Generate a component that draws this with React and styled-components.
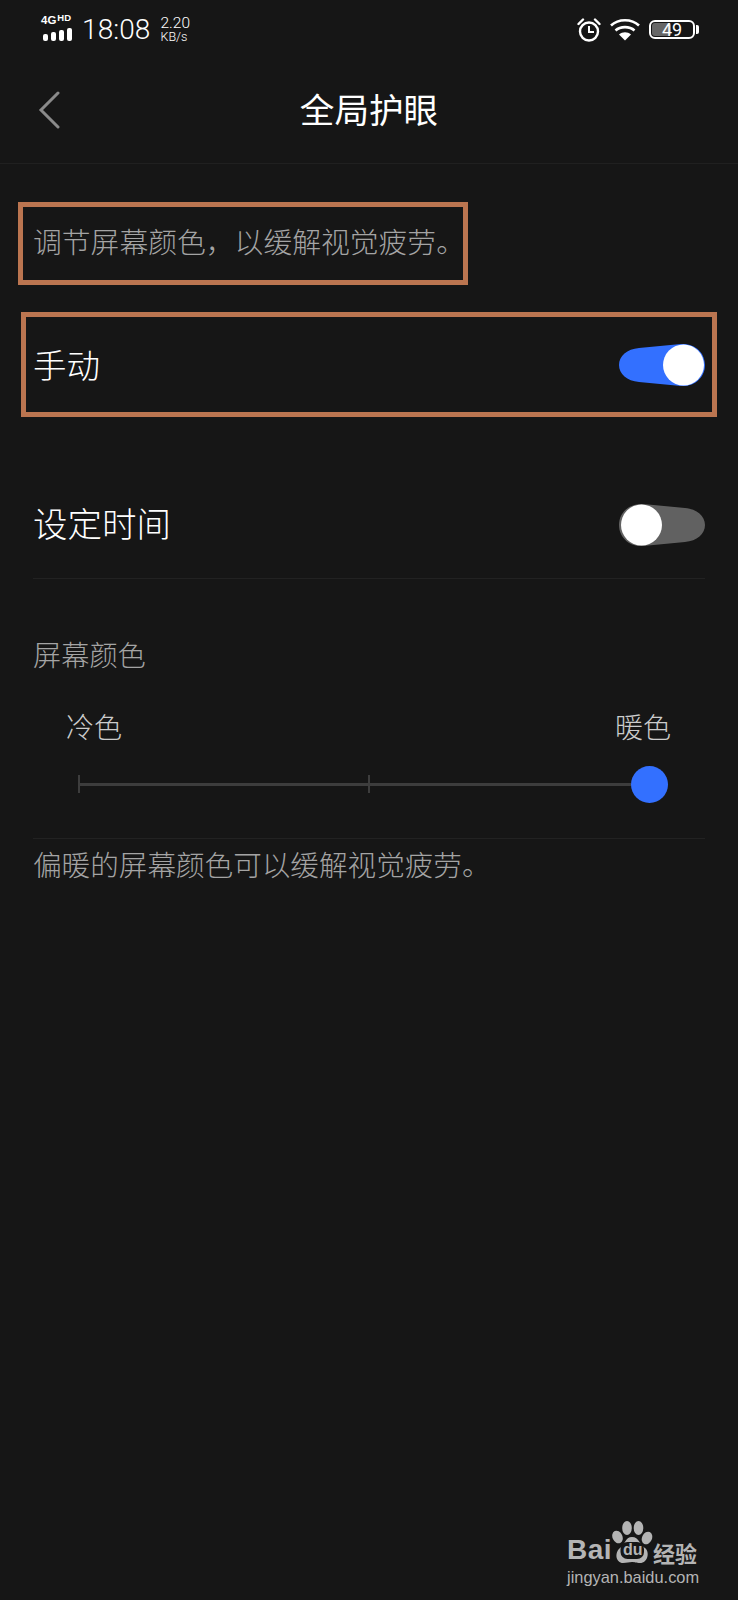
import React from "react";
import styled, { createGlobalStyle } from "styled-components";

const Global = createGlobalStyle`
  html, body {
    margin: 0;
    padding: 0;
    background: #161616;
  }
  * {
    box-sizing: border-box;
  }
`;

const cjk = `"Noto Sans CJK SC", "Noto Sans", sans-serif`;

const Page = styled.div`
  position: relative;
  width: 738px;
  height: 1600px;
  overflow: hidden;
  background: #161616;
  font-family: ${cjk};
  font-weight: 300;
`;

const StatusBar = styled.div`
  display: flex;
  align-items: center;
  justify-content: space-between;
  height: 60px;
  padding: 0 41px 1px 41px;
  color: #fff;
  font-family: Roboto, "Liberation Sans", sans-serif;
`;

const StatusGroup = styled.div`
  display: flex;
  align-items: center;
  gap: ${(p) => p.$gap}px;
`;

const SignalBlock = styled.div`
  display: flex;
  flex-direction: column;
  gap: 2px;
  width: 31px;
  margin-bottom: 5px;
`;

const NetLabel = styled.div`
  font-family: "Liberation Sans", sans-serif;
  font-size: 11.5px;
  font-weight: 700;
  line-height: 11px;
  white-space: nowrap;

  sup {
    font-size: 9.5px;
    line-height: 8px;
    vertical-align: 3px;
    margin-left: 1px;
  }
`;

const Bars = styled.div`
  display: flex;
  align-items: flex-end;
  gap: 3px;
  height: 13px;
  margin-left: 2px;
`;

const Bar = styled.span`
  width: 5px;
  height: ${(p) => p.$h}px;
  border-radius: 2px;
  background: #fff;
`;

const Clock = styled.div`
  font-size: 28px;
  font-weight: 300;
  line-height: 32px;
  letter-spacing: 0.1px;
`;

const Speed = styled.div`
  display: flex;
  flex-direction: column;
  font-size: 15.5px;
  font-weight: 300;
  line-height: 14px;

  small {
    font-size: 12.5px;
    line-height: 13px;
  }
`;

const Battery = styled.div`
  position: relative;
  display: flex;
  align-items: center;
  justify-content: center;
  width: 46px;
  height: 19px;
  margin-right: 2px;
  border: 2px solid #fff;
  border-radius: 6px;
  font-size: 18px;
  font-weight: 400;
  line-height: 15px;

  &::before {
    content: "";
    position: absolute;
    left: 1px;
    top: 1px;
    bottom: 1px;
    width: 19px;
    border-radius: 3px;
    background: #666;
  }

  &::after {
    content: "";
    position: absolute;
    right: -6px;
    top: 3px;
    width: 3px;
    height: 9px;
    border-radius: 0 2px 2px 0;
    background: #fff;
  }

  span {
    position: relative;
    z-index: 1;
  }
`;

const Header = styled.header`
  position: relative;
  display: flex;
  align-items: center;
  justify-content: center;
  height: 104px;
  padding-bottom: 8px;
  border-bottom: 1px solid #202020;
`;

const BackIcon = styled.svg`
  position: absolute;
  left: 38px;
  top: 31px;
`;

const Title = styled.h1`
  margin: 0;
  color: #fff;
  font-size: 34.6px;
  font-weight: 400;
  line-height: 44px;
`;

const Notes = styled.div`
  display: flex;
  flex-direction: column;
  align-items: flex-start;
  gap: 27px;
  padding-top: 38px;
`;

const NoteBox = styled.div`
  display: flex;
  align-items: center;
  justify-content: space-between;
  margin-left: ${(p) => p.$left}px;
  width: ${(p) => p.$width}px;
  height: ${(p) => p.$height}px;
  padding: 0 ${(p) => p.$padRight}px 0 ${(p) => 33 - p.$left - 5}px;
  border: 5px solid #bb7550;
`;

const Description = styled.p`
  margin: 0 0 6px;
  color: #a4a4a4;
  font-size: 28.8px;
  line-height: 36px;
  white-space: nowrap;
`;

const RowLabel = styled.span`
  color: #fff;
  font-size: ${(p) => p.$size}px;
  line-height: 44px;
  margin-bottom: ${(p) => p.$lift}px;
`;

const SettingRow = styled.div`
  display: flex;
  align-items: center;
  justify-content: space-between;
  height: 109px;
  margin: 53px 33px 0;
  padding-top: 2px;
  border-bottom: 1px solid #222;
`;

const SectionLabel = styled.div`
  margin: 57px 33px 0;
  color: #a4a4a4;
  font-size: 28.2px;
  line-height: 36px;
`;

const ScaleLabels = styled.div`
  display: flex;
  justify-content: space-between;
  margin: 36px 67px 0 66px;
  color: #cccccc;
  font-size: 28px;
  line-height: 36px;
`;

const Slider = styled.div`
  display: flex;
  align-items: center;
  height: 38px;
  margin-top: 21px;
  padding: 0 70px 0 78px;
`;

const Tick = styled.span`
  flex: none;
  width: 2px;
  height: 18px;
  background: #3d3d3d;
`;

const Line = styled.span`
  flex: ${(p) => (p.$width ? `0 0 ${p.$width}px` : 1)};
  height: 3px;
  background: #3d3d3d;
`;

const Thumb = styled.span`
  flex: none;
  width: 37px;
  height: 37px;
  border-radius: 50%;
  background: #3370ff;
`;

const Hint = styled.div`
  margin: 35px 33px 0;
  padding-top: 7px;
  border-top: 1px solid #222;
  color: #a4a4a4;
  font-size: 28.6px;
  line-height: 36px;
  white-space: nowrap;
`;

const Watermark = styled.div`
  position: absolute;
  left: 567px;
  top: 1521px;
  display: flex;
  flex-direction: column;
  color: #b4b4b4;
`;

const LogoRow = styled.div`
  display: flex;
  align-items: flex-end;
  height: 43px;
`;

const Bai = styled.span`
  width: 45px;
  margin-bottom: 2px;
  font-family: "Liberation Sans", sans-serif;
  font-size: 28px;
  font-weight: 700;
  line-height: 24px;
  letter-spacing: 0.5px;
`;

const Paw = styled.div`
  position: relative;
  width: 41px;
  height: 43px;
`;

const Du = styled.span`
  position: absolute;
  left: 11px;
  top: 21px;
  font-family: "Liberation Sans", sans-serif;
  font-size: 16px;
  font-weight: 700;
  line-height: 16px;
`;

const Jing = styled.span`
  font-size: 22px;
  font-weight: 700;
  line-height: 24px;
  white-space: nowrap;
`;

const Domain = styled.div`
  margin-top: 2px;
  font-family: "Liberation Sans", sans-serif;
  font-size: 16.4px;
  line-height: 22px;
  white-space: nowrap;
`;

const Toggle = ({ on }) => (
  <svg width="86" height="44" viewBox="0 0 86 44">
    {on ? (
      <>
        <path
          d="M20 5 L62 1 C76 0 86 10 86 22 C86 34 76 44 62 43 L20 39 C8 38 0 31 0 22 C0 13 8 6 20 5 Z"
          fill="#3370ff"
        />
        <circle cx="64.5" cy="22" r="20.5" fill="#fff" />
      </>
    ) : (
      <>
        <path
          d="M66 5 L24 1 C10 0 0 10 0 22 C0 34 10 44 24 43 L66 39 C78 38 86 31 86 22 C86 13 78 6 66 5 Z"
          fill="#616161"
        />
        <circle cx="22.5" cy="22" r="20.5" fill="#fff" />
      </>
    )}
  </svg>
);

const AlarmIcon = () => (
  <svg width="24" height="24" viewBox="0 0 24 24" fill="none" stroke="#fff">
    <circle cx="12" cy="13.5" r="9" strokeWidth="2.4" />
    <path d="M12 8 V14 H17" strokeWidth="2" />
    <path d="M1.5 6 L6 1.5 M22.5 6 L18 1.5" strokeWidth="2.4" strokeLinecap="round" />
  </svg>
);

const WifiIcon = () => (
  <svg width="32" height="23" viewBox="0 0 31 23" fill="none" stroke="#fff" strokeWidth="2.6">
    <path d="M1.5 7.5 C9 0.5 22 0.5 29.5 7.5" />
    <path d="M6 12.5 C11 8 20 8 25 12.5" />
    <path d="M15.5 22.5 L9.5 16.5 C13 13.5 18 13.5 21.5 16.5 Z" fill="#fff" stroke="none" />
  </svg>
);

const PawIcon = () => (
  <svg width="41" height="43" viewBox="0 0 41 43" fill="#b4b4b4">
    <ellipse cx="5.5" cy="16" rx="5" ry="6.5" transform="rotate(-25 5.5 16)" />
    <ellipse cx="15" cy="7" rx="4.8" ry="7" />
    <ellipse cx="26.5" cy="7" rx="4.8" ry="7" />
    <ellipse cx="35" cy="17" rx="5" ry="6.5" transform="rotate(25 35 17)" />
    <path d="M20 16 C27 16 28 24 33 27 C38 31 36 42 28 42 C24 42 23 41 20 41 C17 41 15 42 11 42 C4 42 2 32 8 27 C13 24 13 16 20 16 Z" />
    <rect x="8.5" y="21" width="23.5" height="17" rx="7" fill="#161616" />
  </svg>
);

export default function App() {
  return (
    <Page>
      <Global />
      <StatusBar>
        <StatusGroup $gap={10}>
          <SignalBlock>
            <NetLabel>
              4G<sup>HD</sup>
            </NetLabel>
            <Bars>
              <Bar $h={7} />
              <Bar $h={9} />
              <Bar $h={11} />
              <Bar $h={13} />
            </Bars>
          </SignalBlock>
          <Clock>18:08</Clock>
          <Speed>
            2.20
            <small>KB/s</small>
          </Speed>
        </StatusGroup>
        <StatusGroup $gap={8}>
          <AlarmIcon />
          <WifiIcon />
          <Battery>
            <span>49</span>
          </Battery>
        </StatusGroup>
      </StatusBar>

      <Header>
        <BackIcon width="22" height="38" viewBox="0 0 22 38" fill="none">
          <path d="M20 2 L3 19 L20 36" stroke="#8a8a8a" strokeWidth="3" strokeLinecap="round" />
        </BackIcon>
        <Title>全局护眼</Title>
      </Header>

      <Notes>
        <NoteBox $left={18} $width={450} $height={83} $padRight={0}>
          <Description>调节屏幕颜色，以缓解视觉疲劳。</Description>
        </NoteBox>
        <NoteBox $left={21} $width={696} $height={105} $padRight={7}>
          <RowLabel $size={33.5} $lift={2}>手动</RowLabel>
          <Toggle on />
        </NoteBox>
      </Notes>

      <SettingRow>
        <RowLabel $size={34.5} $lift={6}>设定时间</RowLabel>
        <Toggle />
      </SettingRow>

      <SectionLabel>屏幕颜色</SectionLabel>
      <ScaleLabels>
        <span>冷色</span>
        <span>暖色</span>
      </ScaleLabels>
      <Slider>
        <Tick />
        <Line $width={288} />
        <Tick />
        <Line />
        <Thumb />
      </Slider>
      <Hint>偏暖的屏幕颜色可以缓解视觉疲劳。</Hint>

      <Watermark>
        <LogoRow>
          <Bai>Bai</Bai>
          <Paw>
            <PawIcon />
            <Du>du</Du>
          </Paw>
          <Jing>经验</Jing>
        </LogoRow>
        <Domain>jingyan.baidu.com</Domain>
      </Watermark>
    </Page>
  );
}
